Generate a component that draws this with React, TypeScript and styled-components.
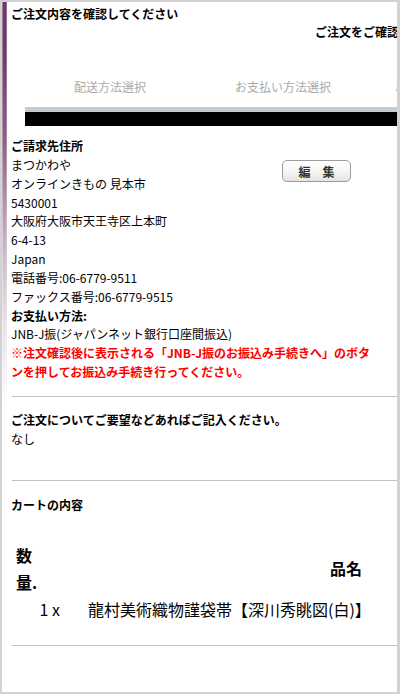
import * as React from 'react';
import styled, { createGlobalStyle } from 'styled-components';

const GlobalStyle = createGlobalStyle`
  html, body {
    margin: 0;
    padding: 0;
    background: #fff;
  }
  body {
    font-family: "Noto Sans CJK JP", "Noto Sans", sans-serif;
    font-size: 12px;
    color: #000;
  }
`;

const Frame = styled('div')`
  box-sizing: border-box;
  width: 400px;
  height: 694px;
  border: 2px solid #d2d2d2;
  border-right-width: 3px;
  display: flex;
  overflow: hidden;
`;

const SideBar = styled('div')`
  flex: 0 0 5px;
  background: linear-gradient(
    to bottom,
    #6e3a67 0px,
    #6e3a67 50px,
    #8c6386 140px,
    #c7b2c4 240px,
    #e9e0e8 320px,
    #ffffff 410px
  );
  box-shadow: inset 1px 0 0 rgba(255, 255, 255, 0.35), inset -1px 0 0 rgba(255, 255, 255, 0.25);
`;

const Main = styled('div')`
  flex: 1 1 auto;
  min-width: 0;
  overflow: hidden;
  padding-left: 4px;
`;

const PageTitle = styled('div')`
  font-weight: bold;
  line-height: 18px;
  padding-top: 3px;
  white-space: nowrap;
`;

const SubTitle = styled('div')`
  font-weight: bold;
  line-height: 18px;
  margin-left: 304px;
  white-space: nowrap;
`;

const Steps = styled('div')`
  width: 560px;
  margin: 37px 0 0 14px;
`;

const StepLabels = styled('div')`
  display: grid;
  grid-template-columns: 170px 176px 1fr;
  line-height: 18px;
  color: #a9a9a9;
  white-space: nowrap;
`;

const StepLabel = styled('div')<{ $align?: 'center' | 'left' }>`
  text-align: ${(p) => p.$align ?? 'center'};
  padding-left: ${(p) => (p.$align === 'left' ? '24px' : '0')};
`;

const StepBar = styled('div')`
  margin-top: 11px;
  height: 14px;
  background: #000;
  border-top: 5px solid #c5ccd1;
`;

const Block = styled('div')`
  line-height: 18.85px;
`;

const BillingRow = styled('div')`
  display: flex;
  margin-top: 11px;
`;

const AddressCol = styled('div')`
  flex: 0 0 271px;
`;

const Heading = styled('div')`
  font-weight: bold;
`;

const EditButton = styled('button')`
  margin-top: 23px;
  width: 69px;
  height: 22px;
  padding: 0;
  border: 1px solid #9c9c9c;
  border-radius: 5px;
  background: linear-gradient(to bottom, #ffffff 0%, #f6f6f6 50%, #e4e4e4 100%);
  font-family: "Noto Sans CJK JP", sans-serif;
  font-size: 12px;
  font-weight: bold;
  color: #333;
  white-space: pre;
`;

const Notice = styled('div')`
  color: #f00;
  font-weight: bold;
`;

const Divider = styled('hr')<{ $top: number }>`
  border: 0;
  border-top: 1px solid #c2c2c2;
  margin: ${(p) => p.$top}px 0 0 1px;
  height: 0;
`;

const Section = styled('div')<{ $top: number }>`
  margin-top: ${(p) => p.$top}px;
  line-height: 18.6px;
`;

const CartGrid = styled('div')`
  display: grid;
  grid-template-columns: 62px 1fr;
  margin-top: 27px;
  font-size: 16px;
`;

const HeadCell = styled('div')<{ $right?: boolean }>`
  font-weight: bold;
  line-height: 27px;
  align-self: center;
  text-align: ${(p) => (p.$right ? 'right' : 'left')};
  padding: ${(p) => (p.$right ? '0 35px 0 0' : '0 0 0 5px')};
`;

const QtyHead = styled('span')`
  display: block;
  width: 22px;
`;

const Cell = styled('div')<{ $right?: boolean }>`
  line-height: 26px;
  text-align: ${(p) => (p.$right ? 'right' : 'left')};
  padding: ${(p) => (p.$right ? '0 13px 0 0' : '0 0 0 15px')};
  white-space: nowrap;
`;

const App: React.FC = () => {
  const address = [
    'まつかわや',
    'オンラインきもの 見本市',
    '5430001',
    '大阪府大阪市天王寺区上本町',
    '6-4-13',
    'Japan',
    '電話番号:06-6779-9511',
    'ファックス番号:06-6779-9515',
  ];

  return (
    <>
      <GlobalStyle />
      <Frame>
        <SideBar />
        <Main>
          <PageTitle>ご注文内容を確認してください</PageTitle>
          <SubTitle>ご注文をご確認ください</SubTitle>
          <Steps>
            <StepLabels>
              <StepLabel>配送方法選択</StepLabel>
              <StepLabel>お支払い方法選択</StepLabel>
              <StepLabel $align="left">お客様情報の確認</StepLabel>
            </StepLabels>
            <StepBar />
          </Steps>

          <Block>
            <BillingRow>
              <AddressCol>
                <Heading>ご請求先住所</Heading>
                {address.map((line) => (
                  <div key={line}>{line}</div>
                ))}
              </AddressCol>
              <EditButton type="button">{'編　集'}</EditButton>
            </BillingRow>
            <Heading>お支払い方法:</Heading>
            <div>JNB-J振(ジャパンネット銀行口座間振込)</div>
            <Notice>
              ※注文確認後に表示される「JNB-J振のお振込み手続きへ」のボタ
              <br />
              ンを押してお振込み手続き行ってください。
            </Notice>
          </Block>

          <Divider $top={14} />
          <Section $top={14}>
            <Heading>ご注文についてご要望などあればご記入ください。</Heading>
            <div>なし</div>
          </Section>

          <Divider $top={32} />
          <Section $top={15}>
            <Heading>カートの内容</Heading>
          </Section>

          <CartGrid>
            <HeadCell>
              <QtyHead>数量.</QtyHead>
            </HeadCell>
            <HeadCell $right>品名</HeadCell>
            <Cell $right>1 x</Cell>
            <Cell>龍村美術織物謹袋帯【深川秀眺図(白)】</Cell>
          </CartGrid>
          <Divider $top={23} />
        </Main>
      </Frame>
    </>
  );
};

export default App;
